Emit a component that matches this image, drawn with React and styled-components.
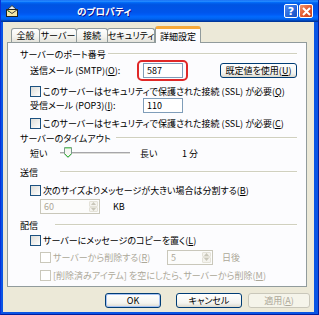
import React from "react";
import styled, { createGlobalStyle } from "styled-components";

const GlobalStyle = createGlobalStyle`
  html, body {
    margin: 0;
    padding: 0;
    background: #ffffff;
  }
  body {
    font-family: "Noto Sans CJK JP", "Noto Sans", sans-serif;
    font-size: 9px;
    font-feature-settings: "palt" 1;
    color: #000000;
  }
`;

function TitleIcon() {
  return (
    <svg width="14" height="14" viewBox="0 0 14 14">
      <polygon points="2,6 7,1.5 12,6" fill="#e8ecef" stroke="#2a3a3a" strokeWidth="1" />
      <rect x="1.5" y="5.5" width="11" height="7" fill="#f4e6a6" stroke="#202020" strokeWidth="1" />
      <polyline points="1.5,5.5 7,9.5 12.5,5.5" fill="none" stroke="#404040" strokeWidth="1" />
      <rect x="3" y="7" width="2" height="1" fill="#3a8a3a" />
    </svg>
  );
}

function SliderThumb() {
  return (
    <svg width="8" height="11" viewBox="0 0 8 11">
      <polygon points="0.5,0.5 7.5,0.5 7.5,7 4,10.5 0.5,7" fill="#f6f6f2" stroke="#7a9a8a" strokeWidth="1" />
      <polyline points="1,7 4,10 7,7" fill="none" stroke="#3ec03e" strokeWidth="1" />
      <line x1="1" y1="1" x2="7" y2="1" stroke="#5cd65c" strokeWidth="1" />
    </svg>
  );
}

function Spin({ value, width, disabled }) {
  return (
    <SpinBox width={width} disabled={disabled}>
      <SpinValue disabled={disabled}>{value}</SpinValue>
      <SpinButtons>
        <SpinArrow disabled={disabled}>
          <svg width="5" height="3" viewBox="0 0 5 3">
            <polygon points="0,3 2.5,0 5,3" fill={disabled ? "#c9c7ba" : "#4d6185"} />
          </svg>
        </SpinArrow>
        <SpinArrow disabled={disabled}>
          <svg width="5" height="3" viewBox="0 0 5 3">
            <polygon points="0,0 2.5,3 5,0" fill={disabled ? "#c9c7ba" : "#4d6185"} />
          </svg>
        </SpinArrow>
      </SpinButtons>
    </SpinBox>
  );
}

function Check({ label, disabled }) {
  return (
    <CheckLabel disabled={disabled}>
      <CheckBox disabled={disabled} />
      <span>{label}</span>
    </CheckLabel>
  );
}

export default function App() {
  return (
    <>
      <GlobalStyle />
      <Window>
        <TitleBar>
          <TitleIcon />
          <TitleText>のプロパティ</TitleText>
          <Controls>
            <HelpButton>?</HelpButton>
            <CloseButton>
              <svg width="9" height="9" viewBox="0 0 9 9">
                <path d="M1 1 L8 8 M8 1 L1 8" stroke="#ffffff" strokeWidth="2" />
              </svg>
            </CloseButton>
          </Controls>
        </TitleBar>

        <Body>
          <TabStrip>
            <Tab width={29}>全般</Tab>
            <Tab width={38}>サーバー</Tab>
            <Tab width={32}>接続</Tab>
            <Tab width={48}>セキュリティ</Tab>
            <ActiveTab width={46}>詳細設定</ActiveTab>
          </TabStrip>

          <Panel>
            <Row height={14} top={0}>
              <HeadingLabel width={88}>サーバーのポート番号</HeadingLabel>
              <Rule />
            </Row>
            <Row height={15} top={2} indent={10}>
              <FieldLabel width={113}>送信メール (SMTP)(<U>O</U>):</FieldLabel>
              <Highlight>
                <TextInput width={40}>587</TextInput>
              </Highlight>
              <Button width={78} gap={37}>既定値を使用(<U>U</U>)</Button>
            </Row>
            <Row height={14} top={6} indent={10}>
              <Check label={<>このサーバーはセキュリティで保護された接続 (SSL) が必要(<U>Q</U>)</>} />
            </Row>
            <Row height={15} top={0} indent={10}>
              <FieldLabel width={113}>受信メール (POP3)(<U>I</U>):</FieldLabel>
              <TextInput width={40}>110</TextInput>
            </Row>
            <Row height={14} top={3} indent={10}>
              <Check label={<>このサーバーはセキュリティで保護された接続 (SSL) が必要(<U>C</U>)</>} />
            </Row>

            <Row height={14} top={1}>
              <HeadingLabel width={96}>サーバーのタイムアウト</HeadingLabel>
              <Rule />
            </Row>
            <Row height={14} top={1} indent={10}>
              <FieldLabel width={30}>短い</FieldLabel>
              <Slider width={70}>
                <Thumb offset={4}>
                  <SliderThumb />
                </Thumb>
              </Slider>
              <FieldLabel width={42} gap={10}>長い</FieldLabel>
              <span>1 分</span>
            </Row>

            <Row height={14} top={5}>
              <HeadingLabel width={40}>送信</HeadingLabel>
              <Rule />
            </Row>
            <Row height={14} top={4} indent={10}>
              <Check label={<>次のサイズよりメッセージが大きい場合は分割する(<U>B</U>)</>} />
            </Row>
            <Row height={15} top={2} indent={20}>
              <Spin value="60" width={60} disabled />
              <FieldLabel gap={13}>KB</FieldLabel>
            </Row>

            <Row height={14} top={4}>
              <HeadingLabel width={35}>配信</HeadingLabel>
              <Rule />
            </Row>
            <Row height={14} top={1} indent={10}>
              <Check label={<>サーバーにメッセージのコピーを置く(<U>L</U>)</>} />
            </Row>
            <Row height={14} top={3} indent={20}>
              <CheckSlot width={127}>
                <Check label={<>サーバーから削除する(<U>R</U>)</>} disabled />
              </CheckSlot>
              <Spin value="5" width={46} disabled />
              <FieldLabel gap={9} disabled>日後</FieldLabel>
            </Row>
            <Row height={14} top={4} indent={20}>
              <Check label={<>[削除済みアイテム] を空にしたら、サーバーから削除(<U>M</U>)</>} disabled />
            </Row>
          </Panel>

          <Footer>
            <Button width={56} isDefault>OK</Button>
            <Button width={66} gap={15}>キャンセル</Button>
            <Button width={62} gap={6} disabled>適用(<U>A</U>)</Button>
          </Footer>
        </Body>
      </Window>
    </>
  );
}

const Window = styled.div`
  width: 319px;
  height: 315px;
  box-sizing: border-box;
  display: flex;
  flex-direction: column;
  background: #0a55e4;
  border-left: 1px solid #0831d9;
  border-right: 1px solid #001ea0;
  border-bottom: 1px solid #001ea0;
`;

const TitleBar = styled.div`
  height: 22px;
  flex-shrink: 0;
  display: flex;
  align-items: center;
  padding: 0 5px 0 4px;
  background: linear-gradient(
    to bottom,
    #0058ee 0%,
    #3593ff 4%,
    #288eff 6%,
    #127dff 8%,
    #036ffc 10%,
    #0262ee 14%,
    #0057e5 20%,
    #0054e3 24%,
    #0055eb 56%,
    #005bf5 66%,
    #026afe 76%,
    #0062ef 86%,
    #0052d6 92%,
    #0040ab 94%,
    #003092 100%
  );
  color: #ffffff;
`;

const TitleText = styled.span`
  margin-left: 58px;
  font-size: 9.5px;
  font-weight: bold;
  letter-spacing: 0.2px;
  text-shadow: 1px 1px #0f1089;
`;

const Controls = styled.div`
  margin-left: auto;
  display: flex;
  gap: 1px;
`;

const CaptionButton = styled.div`
  width: 14px;
  height: 14px;
  box-sizing: border-box;
  border: 1px solid #ffffff;
  border-radius: 2px;
  display: flex;
  align-items: center;
  justify-content: center;
  color: #ffffff;
`;

const HelpButton = styled(CaptionButton)`
  background: linear-gradient(135deg, #4f8cf5, #2463d8 60%, #1c4fc0);
  font-family: "DejaVu Sans", sans-serif;
  font-weight: bold;
  font-size: 11px;
  line-height: 1;
`;

const CloseButton = styled(CaptionButton)`
  background: linear-gradient(135deg, #f0946c, #e2562c 55%, #c4401c);
`;

const Body = styled.div`
  flex: 1;
  margin: 0 4px 2px 2px;
  padding: 4px 7px 0 4px;
  background: #ece9d8;
  display: flex;
  flex-direction: column;
`;

const TabStrip = styled.div`
  height: 16px;
  display: flex;
  align-items: flex-end;
  padding-left: 4px;
`;

const Tab = styled.div`
  width: ${({ width }) => width}px;
  height: 14px;
  box-sizing: border-box;
  border: 1px solid #919b9c;
  border-bottom: none;
  border-radius: 3px 3px 0 0;
  background: linear-gradient(to bottom, #ffffff, #f3f3ef 60%, #e3e2da);
  display: flex;
  align-items: center;
  justify-content: center;
  margin-right: -1px;
  white-space: nowrap;
`;

const ActiveTab = styled(Tab)`
  height: 17px;
  margin-left: 1px;
  margin-bottom: -1px;
  position: relative;
  z-index: 1;
  background: #fcfcfe;
  border-top: 3px solid #ffc83c;
  box-shadow: inset 0 1px 0 #fcfcfe;
  border-top-color: #f7a93a;
`;

const Panel = styled.div`
  height: 245px;
  box-sizing: border-box;
  border: 1px solid #919b9c;
  background: #fcfcfe;
  padding: 4px 9px 0 12px;
  display: flex;
  flex-direction: column;
`;

const Row = styled.div`
  height: ${({ height }) => height}px;
  margin-top: ${({ top }) => top}px;
  padding-left: ${({ indent }) => indent || 0}px;
  display: flex;
  align-items: center;
  white-space: nowrap;
`;

const HeadingLabel = styled.span`
  width: ${({ width }) => width}px;
  flex-shrink: 0;
`;

const Rule = styled.div`
  flex: 1;
  height: 0;
  border-top: 1px solid #d0d0bf;
  border-bottom: 1px solid #ffffff;
`;

const FieldLabel = styled.span`
  width: ${({ width }) => (width ? `${width}px` : "auto")};
  margin-left: ${({ gap }) => gap || 0}px;
  flex-shrink: 0;
  color: ${({ disabled }) => (disabled ? "#aca899" : "#000000")};
`;

const U = styled.span`
  text-decoration: underline;
`;

const Highlight = styled.div`
  position: relative;
  display: flex;

  &::after {
    content: "";
    position: absolute;
    top: -3px;
    bottom: -3px;
    left: -6px;
    right: -5px;
    border: 2px solid #e02828;
    border-radius: 5px;
  }
`;

const TextInput = styled.div`
  width: ${({ width }) => width}px;
  height: 15px;
  box-sizing: border-box;
  border: 1px solid #7f9db9;
  background: #ffffff;
  padding-left: 3px;
  display: flex;
  align-items: center;
`;

const Button = styled.div`
  width: ${({ width }) => width}px;
  height: 15px;
  margin-left: ${({ gap }) => gap || 0}px;
  box-sizing: border-box;
  border: 1px solid ${({ disabled }) => (disabled ? "#c9c7ba" : "#003c74")};
  border-radius: 3px;
  background: ${({ disabled }) =>
    disabled
      ? "#f5f4ea"
      : "linear-gradient(to bottom, #ffffff, #f4f4f0 70%, #dcd8cc)"};
  box-shadow: ${({ isDefault }) =>
    isDefault ? "inset 0 0 0 1px #a6c2f3" : "none"};
  color: ${({ disabled }) => (disabled ? "#aca899" : "#000000")};
  display: flex;
  align-items: center;
  justify-content: center;
  white-space: nowrap;
`;

const CheckLabel = styled.label`
  display: flex;
  align-items: center;
  gap: 2px;
  color: ${({ disabled }) => (disabled ? "#aca899" : "#000000")};
`;

const CheckBox = styled.span`
  width: 11px;
  height: 11px;
  box-sizing: border-box;
  flex-shrink: 0;
  border: 1px solid ${({ disabled }) => (disabled ? "#cac8bb" : "#1c5180")};
  background: ${({ disabled }) =>
    disabled ? "#ffffff" : "linear-gradient(135deg, #dcdcd7, #ffffff)"};
`;

const CheckSlot = styled.div`
  width: ${({ width }) => width}px;
  flex-shrink: 0;
`;

const Slider = styled.div`
  width: ${({ width }) => width}px;
  height: 12px;
  position: relative;
  display: flex;
  align-items: center;

  &::before {
    content: "";
    flex: 1;
    height: 1px;
    border-top: 1px solid #a7a6aa;
    border-bottom: 1px solid #ffffff;
    background: #dcdcd8;
  }
`;

const Thumb = styled.div`
  position: absolute;
  left: ${({ offset }) => offset}px;
  top: 0;
  display: flex;
`;

const SpinBox = styled.div`
  width: ${({ width }) => width}px;
  height: 15px;
  box-sizing: border-box;
  border: 1px solid ${({ disabled }) => (disabled ? "#c9c7ba" : "#7f9db9")};
  background: ${({ disabled }) => (disabled ? "#fcfcfb" : "#ffffff")};
  display: flex;
  align-items: stretch;
`;

const SpinValue = styled.span`
  flex: 1;
  padding-left: 3px;
  display: flex;
  align-items: center;
  color: ${({ disabled }) => (disabled ? "#aca899" : "#000000")};
`;

const SpinButtons = styled.div`
  width: 9px;
  display: flex;
  flex-direction: column;
  margin: 1px;
`;

const SpinArrow = styled.div`
  flex: 1;
  display: flex;
  align-items: center;
  justify-content: center;
  border: 1px solid ${({ disabled }) => (disabled ? "#e4e2d8" : "#b8c8e8")};
  border-radius: 1px;
  background: ${({ disabled }) => (disabled ? "#f4f3ee" : "#c6d6fa")};
`;

const Footer = styled.div`
  display: flex;
  justify-content: flex-end;
  padding-top: 6px;
  margin-right: -3px;
`;
